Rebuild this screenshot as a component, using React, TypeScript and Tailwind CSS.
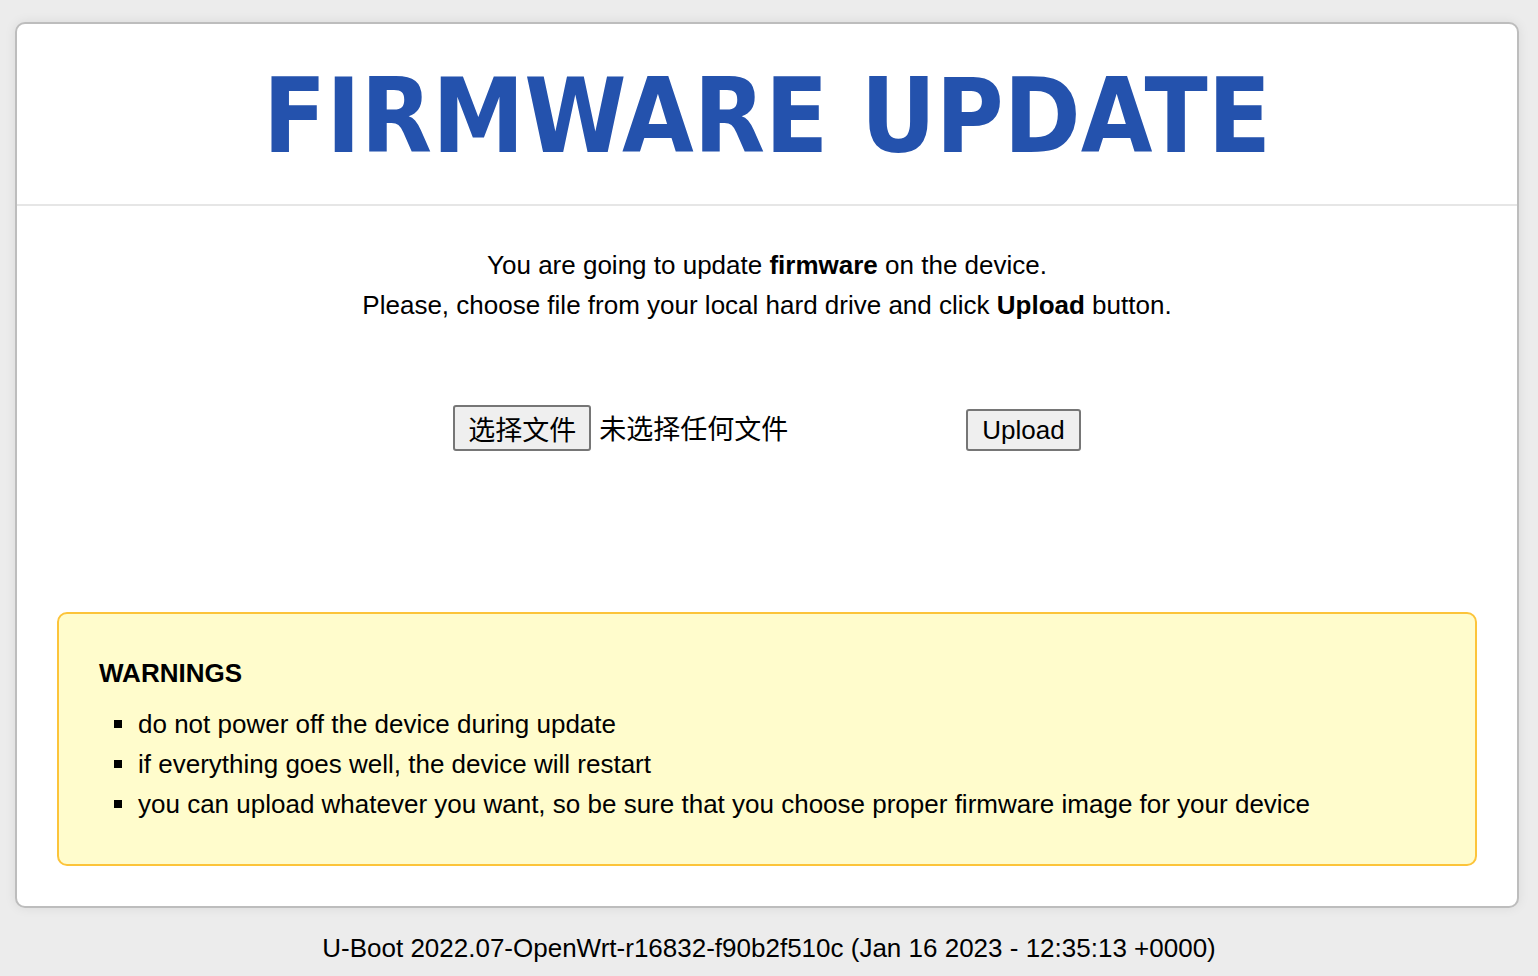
export default function App() {
  const warnings = [
    "do not power off the device during update",
    "if everything goes well, the device will restart",
    "you can upload whatever you want, so be sure that you choose proper firmware image for your device",
  ];

  return (
    <div className="min-h-screen bg-[#ececec] pt-[22px] px-[15px] text-black [font-family:'Liberation_Sans',Arial,'Noto_Sans_CJK_SC',sans-serif]">
      <div className="w-[1504px] bg-white border-2 border-[#bdbdbd] rounded-[10px] shadow-[0_0_12px_rgba(0,0,0,0.08)]">
        {/* header */}
        <div className="h-[182px] border-b-2 border-[#e6e6e6] flex items-center justify-center">
          <h1 className="text-[#2452ad] font-bold text-[103px] leading-none pt-[4px] [font-family:'DejaVu_Sans_Condensed','DejaVu_Sans',Verdana,sans-serif]">
            FIRMWARE UPDATE
          </h1>
        </div>

        <div className="pt-[39px] text-center text-[26px] leading-[40px]">
          <p>
            You are going to update <b>firmware</b> on the device.
          </p>
          <p>
            Please, choose file from your local hard drive and click <b>Upload</b> button.
          </p>
        </div>

        <div className="mt-[80px] flex items-start justify-center">
          <div className="flex items-center w-[513px]">
            <button className="h-[46px] px-[13px] border-2 border-[#767676] rounded-[3px] bg-[#efefef] text-[27px] leading-none [font-family:'Noto_Sans_CJK_SC',sans-serif]">
              选择文件
            </button>
            <span className="ml-[8px] text-[27px] [font-family:'Noto_Sans_CJK_SC',sans-serif]">未选择任何文件</span>
          </div>
          <button className="mt-[4px] h-[42px] px-[14px] border-2 border-[#767676] rounded-[3px] bg-[#efefef] text-[26px] leading-none">
            Upload
          </button>
        </div>

        <div className="mt-[161px] mx-[40px] mb-[40px] h-[254px] bg-[#fffccc] border-2 border-[#fcc43a] rounded-[10px] px-[40px] pt-[44px]">
          <h2 className="font-bold text-[26px] leading-[30px]">WARNINGS</h2>
          <ul className="mt-[16px] ml-[15px]">
            {warnings.map((w) => (
              <li key={w} className="flex items-center text-[26px] leading-[40px]">
                <span className="w-[8px] h-[8px] bg-black mr-[16px]"></span>
                {w}
              </li>
            ))}
          </ul>
        </div>
      </div>

      <div className="text-center text-[26px] leading-none pt-[27px] pb-[15px]">
        U-Boot 2022.07-OpenWrt-r16832-f90b2f510c (Jan 16 2023 - 12:35:13 +0000)
      </div>
    </div>
  );
}
